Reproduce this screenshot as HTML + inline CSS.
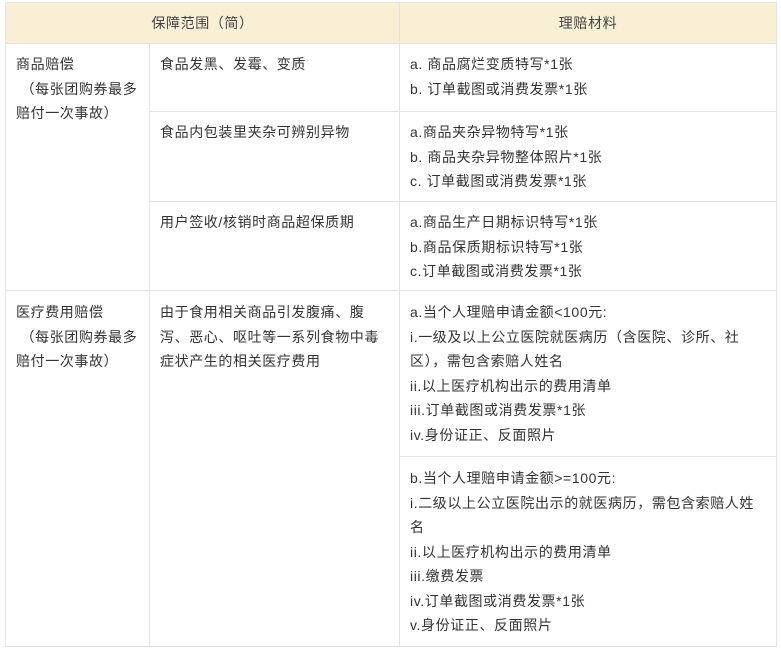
<!DOCTYPE html>
<html><head><meta charset="utf-8"><style>
body{margin:0;background:#fff;width:781px;height:652px;position:relative;overflow:hidden;font-family:"Liberation Sans","Noto Sans CJK SC",sans-serif;font-size:14px;letter-spacing:0.6px;color:#333}
.c{position:absolute;box-sizing:border-box;border:1px solid #e3e3e3;line-height:24.5px;padding:8px 12px 0 10px}
.h{background:#f8efd4;text-align:center;padding:0;line-height:40px;color:#444}
.n{padding-right:2px}
</style></head><body>
<div class="c h" style="left:5px;top:2px;width:395px;height:42px">保障范围（简）</div>
<div class="c h" style="left:399px;top:2px;width:378px;height:42px">理赔材料</div>

<div class="c n" style="left:5px;top:43px;width:145px;height:248px">商品赔偿<br>&nbsp;（每张团购券最多赔付一次事故）</div>
<div class="c" style="left:149px;top:43px;width:251px;height:69px">食品发黑、发霉、变质</div>
<div class="c" style="left:399px;top:43px;width:378px;height:69px">a. 商品腐烂变质特写*1张<br>b. 订单截图或消费发票*1张</div>
<div class="c" style="left:149px;top:111px;width:251px;height:91px">食品内包装里夹杂可辨别异物</div>
<div class="c" style="left:399px;top:111px;width:378px;height:91px">a.商品夹杂异物特写*1张<br>b. 商品夹杂异物整体照片*1张<br>c. 订单截图或消费发票*1张</div>
<div class="c" style="left:149px;top:201px;width:251px;height:90px">用户签收/核销时商品超保质期</div>
<div class="c" style="left:399px;top:201px;width:378px;height:90px">a.商品生产日期标识特写*1张<br>b.商品保质期标识特写*1张<br>c.订单截图或消费发票*1张</div>

<div class="c n" style="left:5px;top:290px;width:145px;height:357px;padding-top:9px">医疗费用赔偿<br>&nbsp;（每张团购券最多赔付一次事故）</div>
<div class="c" style="left:149px;top:290px;width:251px;height:357px;padding-top:9px">由于食用相关商品引发腹痛、腹泻、恶心、呕吐等一系列食物中毒症状产生的相关医疗费用</div>
<div class="c" style="left:399px;top:290px;width:378px;height:167px;padding-top:9px">a.当个人理赔申请金额&lt;100元:<br>i.一级及以上公立医院就医病历（含医院、诊所、社区），需包含索赔人姓名<br>ii.以上医疗机构出示的费用清单<br>iii.订单截图或消费发票*1张<br>iv.身份证正、反面照片</div>
<div class="c" style="left:399px;top:456px;width:378px;height:191px;padding-top:9px">b.当个人理赔申请金额&gt;=100元:<br>i.二级以上公立医院出示的就医病历，需包含索赔人姓名<br>ii.以上医疗机构出示的费用清单<br>iii.缴费发票<br>iv.订单截图或消费发票*1张<br>v.身份证正、反面照片</div>
</body></html>
